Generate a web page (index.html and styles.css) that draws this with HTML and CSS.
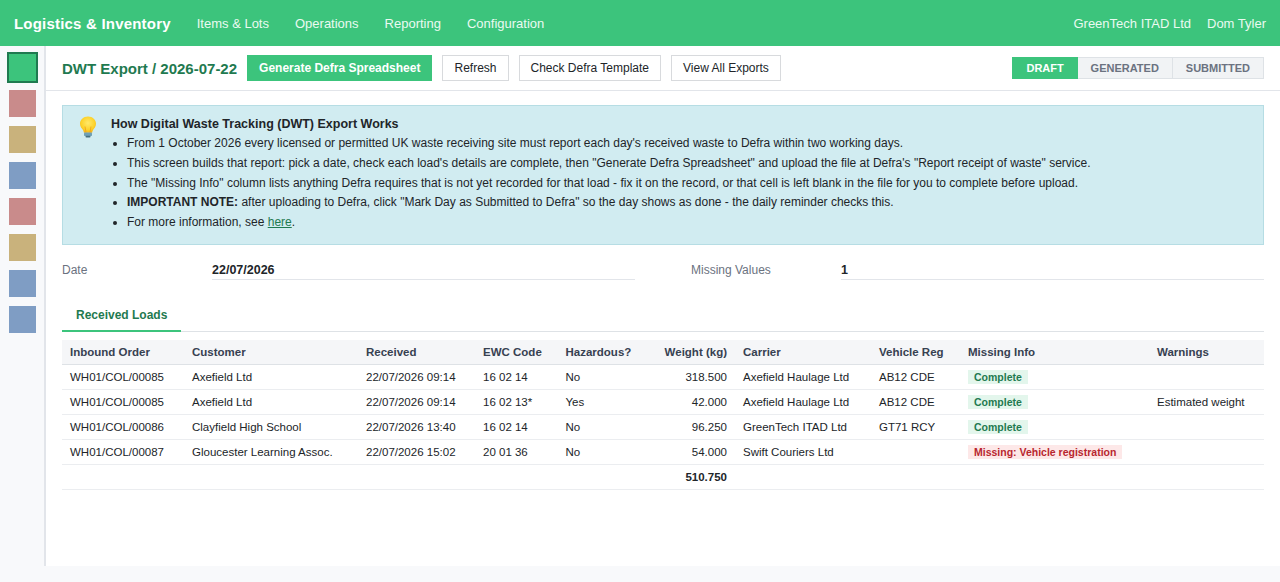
FILE: index.html
```html
<!DOCTYPE html>
<html lang="en">

<head>
    <meta charset="UTF-8">
    <title>DWT Export / 2026-07-22</title>
    <link rel="stylesheet" href="styles.css">
</head>

<body>
    <nav class="navbar">
        <span class="brand">Logistics &amp; Inventory</span>
        <a class="nav-link">Items &amp; Lots</a>
        <a class="nav-link">Operations</a>
        <a class="nav-link">Reporting</a>
        <a class="nav-link">Configuration</a>
        <span class="nav-right">
            <a class="nav-link">GreenTech ITAD Ltd</a>
            <a class="nav-link">Dom Tyler</a>
        </span>
    </nav>
    <div class="page">
        <aside class="sidebar">
            <div class="tile green active"></div>
            <div class="tile red"></div>
            <div class="tile tan"></div>
            <div class="tile blue"></div>
            <div class="tile red"></div>
            <div class="tile tan"></div>
            <div class="tile blue"></div>
            <div class="tile blue"></div>
        </aside>
        <main class="content">
            <div class="control-panel">
                <h1 class="title">DWT Export / 2026-07-22</h1>
                <button class="btn btn-primary">Generate Defra Spreadsheet</button>
                <button class="btn">Refresh</button>
                <button class="btn">Check Defra Template</button>
                <button class="btn">View All Exports</button>
                <div class="statusbar">
                    <span class="step current">DRAFT</span>
                    <span class="step">GENERATED</span>
                    <span class="step">SUBMITTED</span>
                </div>
            </div>
            <div class="sheet">
                <div class="alert">
                    <svg class="bulb" width="18" height="22" viewBox="0 0 18 22">
                        <defs>
                            <radialGradient id="glow" cx="50%" cy="40%" r="60%">
                                <stop offset="0" stop-color="#ffe96b" />
                                <stop offset=".7" stop-color="#fdd22a" />
                                <stop offset="1" stop-color="#f5b316" />
                            </radialGradient>
                        </defs>
                        <path d="M9 .5C4.300 .5 1 3.800 1 7.800c0 3 1.900 4.600 3 6.300.6 1 .8 1.900.9 2.700h8.200c.1-.8.3-1.700.9-2.700 1.100-1.700 3-3.300 3-6.300C17 3.800 13.700 .5 9 .5z" fill="url(#glow)" />
                        <path d="M7 16.500L6 10.500M11 16.500l1-6" fill="none" stroke="#ef9f1c" stroke-width=".8" />
                        <rect x="5" y="16.600" width="8" height="3.400" rx=".8" fill="#6fa0b5" />
                        <rect x="6.500" y="19.800" width="5" height="1.800" rx=".8" fill="#47707f" />
                    </svg>
                    <div class="alert-body">
                        <strong class="alert-title">How Digital Waste Tracking (DWT) Export Works</strong>
                        <ul>
                            <li>From 1 October 2026 every licensed or permitted UK waste receiving site must report each day's received waste to Defra within two working days.</li>
                            <li>This screen builds that report: pick a date, check each load's details are complete, then "Generate Defra Spreadsheet" and upload the file at Defra's "Report receipt of waste" service.</li>
                            <li>The "Missing Info" column lists anything Defra requires that is not yet recorded for that load - fix it on the record, or that cell is left blank in the file for you to complete before upload.</li>
                            <li><strong>IMPORTANT NOTE:</strong> after uploading to Defra, click "Mark Day as Submitted to Defra" so the day shows as done - the daily reminder checks this.</li>
                            <li>For more information, see <a class="link">here</a>.</li>
                        </ul>
                    </div>
                </div>
                <div class="fields">
                    <div class="field">
                        <span class="field-label">Date</span>
                        <span class="field-value">22/07/2026</span>
                    </div>
                    <div class="field field-right">
                        <span class="field-label">Missing Values</span>
                        <span class="field-value">1</span>
                    </div>
                </div>
                <div class="tabs">
                    <span class="tab">Received Loads</span>
                </div>
                <table class="loads">
                    <thead>
                        <tr>
                            <th class="c-order">Inbound Order</th>
                            <th class="c-customer">Customer</th>
                            <th class="c-received">Received</th>
                            <th class="c-ewc">EWC Code</th>
                            <th class="c-haz">Hazardous?</th>
                            <th class="c-weight num">Weight (kg)</th>
                            <th class="c-carrier">Carrier</th>
                            <th class="c-reg">Vehicle Reg</th>
                            <th class="c-missing">Missing Info</th>
                            <th>Warnings</th>
                        </tr>
                    </thead>
                    <tbody>
                        <tr>
                            <td>WH01/COL/00085</td>
                            <td>Axefield Ltd</td>
                            <td>22/07/2026 09:14</td>
                            <td>16 02 14</td>
                            <td>No</td>
                            <td class="num">318.500</td>
                            <td>Axefield Haulage Ltd</td>
                            <td>AB12 CDE</td>
                            <td><span class="badge ok">Complete</span></td>
                            <td></td>
                        </tr>
                        <tr>
                            <td>WH01/COL/00085</td>
                            <td>Axefield Ltd</td>
                            <td>22/07/2026 09:14</td>
                            <td>16 02 13*</td>
                            <td>Yes</td>
                            <td class="num">42.000</td>
                            <td>Axefield Haulage Ltd</td>
                            <td>AB12 CDE</td>
                            <td><span class="badge ok">Complete</span></td>
                            <td>Estimated weight</td>
                        </tr>
                        <tr>
                            <td>WH01/COL/00086</td>
                            <td>Clayfield High School</td>
                            <td>22/07/2026 13:40</td>
                            <td>16 02 14</td>
                            <td>No</td>
                            <td class="num">96.250</td>
                            <td>GreenTech ITAD Ltd</td>
                            <td>GT71 RCY</td>
                            <td><span class="badge ok">Complete</span></td>
                            <td></td>
                        </tr>
                        <tr>
                            <td>WH01/COL/00087</td>
                            <td>Gloucester Learning Assoc.</td>
                            <td>22/07/2026 15:02</td>
                            <td>20 01 36</td>
                            <td>No</td>
                            <td class="num">54.000</td>
                            <td>Swift Couriers Ltd</td>
                            <td></td>
                            <td><span class="badge bad">Missing: Vehicle registration</span></td>
                            <td></td>
                        </tr>
                        <tr>
                            <td></td>
                            <td></td>
                            <td></td>
                            <td></td>
                            <td></td>
                            <td class="num total">510.750</td>
                            <td></td>
                            <td></td>
                            <td></td>
                            <td></td>
                        </tr>
                    </tbody>
                </table>
            </div>
        </main>
    </div>
</body>

</html>
```

FILE: styles.css
```css
* {
    box-sizing: border-box;
    padding: 0;
    margin: 0;
}

html,
body {
    height: 100%;
}

body {
    display: flex;
    flex-direction: column;
    overflow: hidden;
    background-color: #f8f9fb;
    color: #212529;
    font-family: "Liberation Sans", Arial, sans-serif;
    font-size: 13px;
}

/* navbar */
.navbar {
    display: flex;
    align-items: center;
    flex: none;
    height: 46px;
    padding: 0 14px;
    background-color: #3cc47c;
}

.brand {
    margin-right: 26px;
    color: #fff;
    font-size: 15px;
    font-weight: bold;
    letter-spacing: .2px;
}

.nav-link {
    margin-right: 26px;
    color: #eafaf1;
    font-size: 13px;
}

.nav-right {
    display: flex;
    margin-left: auto;
}

.nav-right .nav-link {
    margin-right: 0;
    margin-left: 16px;
}

/* sidebar */
.page {
    display: flex;
    flex: none;
    height: 520px;
}

.sidebar {
    display: flex;
    flex-direction: column;
    align-items: center;
    flex: none;
    gap: 9px;
    width: 46px;
    padding: 8px 0 0 1px;
    border-right: 2px solid #e2e5ea;
}

.tile {
    width: 27px;
    height: 27px;
}

.tile.active {
    width: 31px;
    height: 31px;
    margin-top: -2px;
    margin-bottom: -2px;
    border: 2px solid #1f7a50;
}

.green {
    background-color: #3cc47c;
}

.red {
    background-color: #c98b8b;
}

.tan {
    background-color: #c9b27c;
}

.blue {
    background-color: #7f9dc4;
}

/* header */
.content {
    flex: 1;
    min-width: 0;
    background-color: #fff;
}

.control-panel {
    display: flex;
    align-items: center;
    height: 45px;
    padding: 0 16px 0 16px;
    border-bottom: 1px solid #e2e5ea;
}

.title {
    margin-right: 10px;
    color: #1f7a50;
    font-size: 15px;
    font-weight: bold;
}

.btn {
    height: 26px;
    margin-right: 10px;
    padding: 0 11px;
    border: 1px solid #d8dadd;
    background-color: #fff;
    color: #212529;
    font-family: inherit;
    font-size: 12px;
}

.btn-primary {
    border-color: #3cc47c;
    background-color: #3cc47c;
    color: #fff;
    font-weight: bold;
}

.statusbar {
    display: flex;
    margin-left: auto;
}

.step {
    height: 22px;
    padding: 0 13px;
    border: 1px solid #dee2e6;
    border-left: 0;
    background-color: #f1f3f5;
    color: #6b7280;
    font-size: 11px;
    font-weight: bold;
    line-height: 20px;
}

.step.current {
    width: 66px;
    padding: 0 12px 0 14px;
    border-color: #3cc47c;
    background-color: #3cc47c;
    color: #fff;
    text-align: center;
}

/* sheet */
.sheet {
    padding: 14px 16px 0;
}

.alert {
    display: flex;
    height: 140px;
    padding: 9px 14px 9px 16px;
    border: 1px solid #b6dde4;
    background-color: #d1ecf1;
    color: #212529;
    font-size: 12px;
}

.bulb {
    flex: none;
    margin-right: 14px;
    margin-top: 1px;
}

.alert-title {
    display: block;
    font-size: 12.500px;
    line-height: 18px;
}

.alert ul {
    margin-top: 1.400px;
    padding-left: 16px;
}

.alert li {
    line-height: 19.600px;
}

.link {
    color: #1f7a50;
    text-decoration: underline;
}

.fields {
    display: flex;
    gap: 56px;
    margin-top: 15px;
}

.field {
    display: flex;
    flex: none;
    width: 573px;
    font-size: 12px;
}

.field-right {
    flex: 1;
}

.field-label {
    flex: none;
    width: 150px;
    padding-top: 3px;
    color: #6b7280;
}

.field-value {
    flex: 1;
    height: 20px;
    border-bottom: 1px solid #e2e5ea;
    font-size: 12.500px;
    font-weight: bold;
    line-height: 21px;
}

.tabs {
    display: flex;
    height: 32px;
    margin-top: 20px;
    border-bottom: 1px solid #dee2e6;
}

.tab {
    height: 32px;
    padding: 0 14px;
    border-bottom: 2px solid #3cc47c;
    color: #1f7a50;
    font-size: 12px;
    font-weight: bold;
    line-height: 30px;
}

/* table */
.loads {
    width: 100%;
    margin-top: 8px;
    border-collapse: collapse;
    table-layout: fixed;
    font-size: 11.500px;
}

.loads th {
    height: 24px;
    padding: 0 8px;
    border-bottom: 1px solid #dee2e6;
    background-color: #f5f6f8;
    color: #374151;
    text-align: left;
    font-size: 11.500px;
}

.loads td {
    height: 25px;
    padding: 0 8px;
    border-bottom: 1px solid #ebedf0;
    white-space: nowrap;
}

.loads .num {
    text-align: right;
}

.total {
    font-weight: bold;
}

.c-order {
    width: 122px;
}

.c-customer {
    width: 174px;
}

.c-received {
    width: 117px;
}

.c-ewc {
    width: 82.500px;
}

.c-haz {
    width: 88.500px;
}

.c-weight {
    width: 89px;
}

.c-carrier {
    width: 136px;
}

.c-reg {
    width: 89px;
}

.c-missing {
    width: 189px;
}

.badge {
    display: inline-block;
    padding: 0 6px;
    font-size: 10.500px;
    font-weight: bold;
    line-height: 14px;
}

.ok {
    background-color: #e3f6ec;
    color: #1f7a50;
}

.bad {
    background-color: #fde8e8;
    color: #b8262f;
}
```
